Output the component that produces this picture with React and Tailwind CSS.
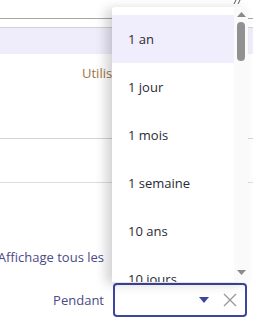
import React from 'react';

const options = ['1 an', '1 jour', '1 mois', '1 semaine', '10 ans', '10 jours'];

export default function App() {
  return (
    <div className="relative w-[253px] h-[321px] overflow-hidden bg-white font-['Open_Sans',sans-serif]">
      {/* page behind the menu */}
      <div className="flex flex-col">
        <div className="h-[19px] border-b border-[#a6a6a6]" />
        <div className="h-[9px] border-b border-[#d2d2d2]" />
        <div className="h-[26px] bg-[#efedfc]" />
        <div className="h-[84px] pt-[6px] pl-[82px]">
          <div className="w-[30px] overflow-hidden">
            <span className="text-[13px] leading-[18px] text-[#a2733f] whitespace-nowrap">Utilis</span>
          </div>
        </div>
        <div className="h-[44px] border-t border-[#d4d4d4]" />
        <div className="h-[66px] border-t border-[#dedede]" />
        <div className="flex w-[104px] justify-end">
          <span className="text-[13px] leading-[18px] text-[#4d4a86] whitespace-nowrap">Affichage tous les</span>
        </div>
        <div className="h-[17px]" />
        <div className="flex items-center gap-[9px]">
          <div className="flex w-[104px] justify-end">
            <span className="text-[13px] leading-[18px] text-[#4d4a86]">Pendant</span>
          </div>
          <div className="flex items-center w-[134px] h-[34px] rounded-[4px] border-2 border-[#3d45a3] bg-white">
            <div className="flex-1" />
            <svg width="10" height="6" viewBox="0 0 10 6" className="mr-[14px]">
              <path d="M0 0h10L5 6z" fill="#3d45a3" />
            </svg>
            <svg width="14" height="14" viewBox="0 0 14 14" className="mr-[8px]">
              <path d="M1 1l12 12M13 1L1 13" stroke="#9a9a9a" strokeWidth="1.4" />
            </svg>
          </div>
        </div>
      </div>

      {/* tiny glyph peeking above the menu */}
      <svg width="8" height="4" viewBox="0 0 8 4" className="absolute left-[233px] top-0">
        <path d="M1 4L3 0M5 4L7 0" stroke="#555" strokeWidth="1" />
      </svg>

      {/* dropdown menu */}
      <div className="absolute left-[112px] top-[7px] w-[136px] h-[275px] flex bg-white rounded-t-[3px] shadow-[-6px_2px_12px_rgba(0,0,0,0.18)] overflow-hidden">
        <div className="flex-1 pt-[8px] flex flex-col">
          {options.map((o, i) => (
            <div
              key={o}
              className={`h-[48px] shrink-0 flex items-center pl-[16px] pt-[2px] text-[13px] text-[#2a2a36] ${i === 0 ? 'bg-[#f0eefc]' : ''}`}
            >
              {o}
            </div>
          ))}
        </div>
        <div className="w-[14px] bg-[#fafafa] flex flex-col items-center">
          <svg width="9" height="5" viewBox="0 0 9 5" className="mt-[5px]">
            <path d="M0 5h9L4.5 0z" fill="#8a8a8a" />
          </svg>
          <div className="mt-[5px] w-[8px] h-[39px] rounded-full bg-[#919191]" />
          <div className="flex-1" />
          <svg width="9" height="5" viewBox="0 0 9 5" className="mb-[7px]">
            <path d="M0 0h9L4.5 5z" fill="#8a8a8a" />
          </svg>
        </div>
      </div>
    </div>
  );
}
